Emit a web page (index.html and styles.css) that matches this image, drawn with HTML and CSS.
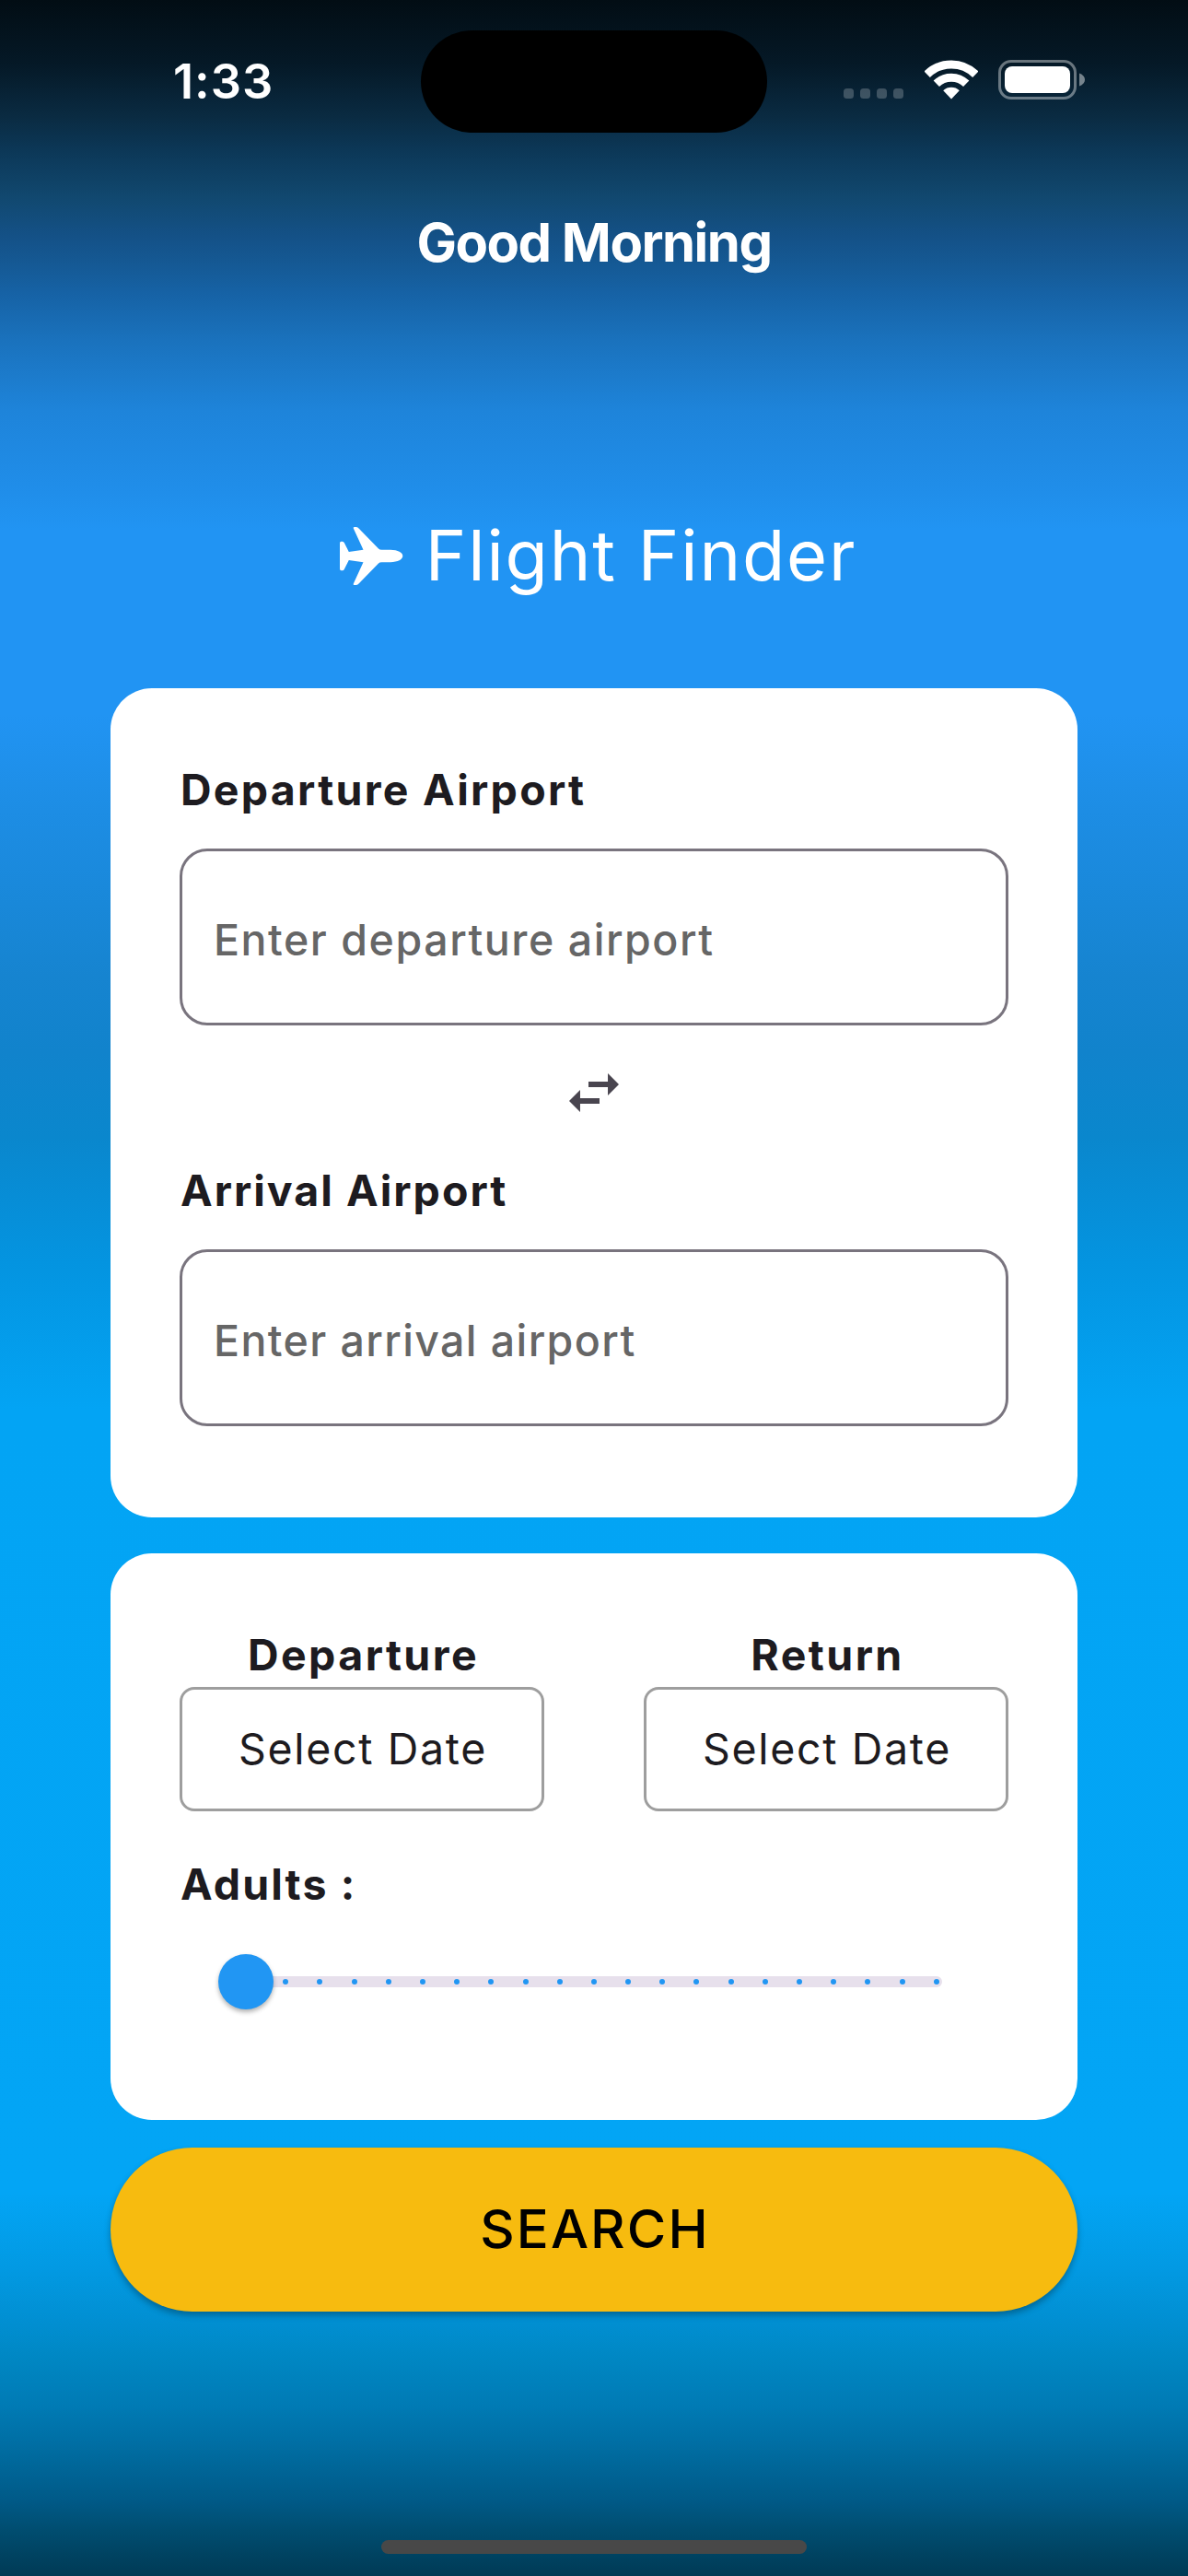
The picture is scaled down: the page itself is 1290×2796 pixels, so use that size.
FILE: index.html
```
<!DOCTYPE html>
<html lang="en">
<head>
<meta charset="utf-8">
<title>Flight Finder</title>
<link rel="stylesheet" href="styles.css">
</head>
<body>
<div class="screen">
  <header class="status-bar">
    <div class="time">1:33</div>
    <div class="island"></div>
    <div class="status-icons">
      <div class="signal"><i></i><i></i><i></i><i></i></div>
      <svg class="wifi" viewBox="0 0 58 43" width="58" height="43">
        <g fill="none" stroke="#fff" stroke-width="9">
          <path d="M2.7 15.7 A37.5 37.5 0 0 1 55.3 15.7"/>
          <path d="M12.8 25.8 A23 23 0 0 1 45.2 25.8"/>
        </g>
        <path fill="#fff" d="M29 42.4 L20.2 33.2 A13 13 0 0 1 37.8 33.2 Z"/>
      </svg>
      <svg class="battery" viewBox="0 0 94 43" width="94" height="43">
        <rect x="1.5" y="1.5" width="82" height="40" rx="12.5" fill="none" stroke="#fff" stroke-opacity=".4" stroke-width="3"/>
        <rect x="7" y="7" width="71" height="29" rx="8" fill="#fff"/>
        <path d="M88 14.5 C92 16 94 18.500 94 21.500 S92 27 88 28.500 Z" fill="#fff" fill-opacity=".45"/>
      </svg>
    </div>
  </header>

  <div class="greeting">Good Morning</div>

  <h1 class="title">
    <svg class="plane" viewBox="0 0 78 79" width="78" height="79">
      <path fill="#fff" d="M9 25.500 Q9 23.700 10.500 23.700 L11.800 23.700 Q13.200 23.700 13.900 25.300 L18.800 35 L34.500 32.700 L23.800 9.600 Q23.200 8 24.800 8 L26.800 8 Q28.600 8 29.800 9.700 L51 31.500 Q52 32.800 54.500 32.800 L64 32.800 C72 33 77.300 35.700 77.300 39.500 S72 46 64 46.200 L54.500 46.200 Q52 46.200 51 47.500 L29.800 69.300 Q28.600 71 26.800 71 L24.800 71 Q23.200 71 23.800 69.400 L34.500 46.300 L18.800 44 L13.900 53.700 Q13.200 55.300 11.800 55.300 L10.500 55.300 Q9 55.300 9 53.500 Z"/>
    </svg>
    <span>Flight Finder</span>
  </h1>

  <section class="card route">
    <div class="label">Departure Airport</div>
    <div class="field"><span>Enter departure airport</span></div>
    <div class="swap">
      <svg viewBox="0 0 24 24" width="72" height="72"><path fill="#49454f" d="M6.990 11L3 15l3.990 4v-3H14v-2H6.990v-3zM21 9l-3.990-4v3H10v2h7.010v3L21 9z"/></svg>
    </div>
    <div class="label arrival">Arrival Airport</div>
    <div class="field arrival-field"><span>Enter arrival airport</span></div>
  </section>

  <section class="card trip">
    <div class="dates">
      <div class="date">
        <div class="date-label">Departure</div>
        <div class="date-box">Select Date</div>
      </div>
      <div class="date">
        <div class="date-label">Return</div>
        <div class="date-box">Select Date</div>
      </div>
    </div>
    <div class="label adults">Adults :</div>
    <div class="slider">
      <div class="ticks">
        <i></i><i></i><i></i><i></i><i></i><i></i><i></i><i></i><i></i><i></i><i></i>
        <i></i><i></i><i></i><i></i><i></i><i></i><i></i><i></i><i></i><i></i>
      </div>
      <div class="thumb"></div>
    </div>
  </section>

  <div class="search">SEARCH</div>

  <div class="home-indicator"></div>
</div>
</body>
</html>
```
FILE: styles.css
```
* { box-sizing: border-box; }

body {
  margin: 0;
  font-family: Inter, "Liberation Sans", sans-serif;
  color: #1d1b20;
}

.screen {
  width: 1290px;
  height: 2796px;
  display: flex;
  flex-direction: column;
  align-items: center;
  overflow: hidden;
  background: linear-gradient(to bottom,
    #020d14 0,
    #051927 70px,
    #0a2b42 127px,
    #0c3858 165px,
    #11486f 214px,
    #145187 257px,
    #155a96 290px,
    #1662a5 318px,
    #1a72bd 370px,
    #1e84da 446px,
    #208eea 535px,
    #2194f3 575px,
    #2194f3 775px,
    #1d8de4 880px,
    #1684d0 1060px,
    #1183cc 1141px,
    #0a87cd 1235px,
    #0494e0 1370px,
    #03a4f4 1530px,
    #03a5f5 2380px,
    #0299e2 2465px,
    #018ed0 2525px,
    #0087c3 2560px,
    #007ab4 2613px,
    #006b9f 2663px,
    #005a88 2713px,
    #004d70 2746px,
    #003a55 2796px);
}

.status-bar {
  width: 100%;
  height: 223px;
  flex: none;
  display: grid;
  grid-template-columns: 457px 376px 457px;
  align-items: start;
}

.time {
  margin-top: 58px;
  padding-left: 188px;
  font-size: 52.3px;
  line-height: 60px;
  font-weight: 600;
  letter-spacing: 1px;
  color: #fff;
}

.island {
  height: 111px;
  margin-top: 33px;
  border-radius: 56px;
  background: #000;
}

.status-icons {
  display: flex;
  align-items: flex-start;
  padding: 65px 0 0 83px;
}

.signal {
  display: flex;
  gap: 7px;
  padding-top: 31px;
  margin-right: 23px;
}

.signal i {
  width: 11px;
  height: 11px;
  border-radius: 3.5px;
  background: rgba(255, 255, 255, .22);
}

.wifi { margin-right: 22px; }

.greeting {
  flex: none;
  font-size: 58px;
  line-height: 80px;
  font-weight: 700;
  letter-spacing: -1.5px;
  color: #fff;
}

.title {
  flex: none;
  display: flex;
  align-items: center;
  gap: 24px;
  height: 100px;
  margin: 250px 0 94px;
  font-size: 75.6px;
  line-height: 100px;
  font-weight: 400;
  letter-spacing: 1.82px;
  color: #fff;
}

.card {
  width: 1050px;
  flex: none;
  padding: 80px 75px 0;
  border-radius: 45px;
  background: #fff;
}

.route { height: 900px; }

.label {
  padding-left: 1px;
  font-size: 46.5px;
  line-height: 60px;
  font-weight: 700;
  letter-spacing: 2.27px;
}

.arrival { letter-spacing: 2px; }

.adults { letter-spacing: 2.1px; }

.field {
  display: flex;
  align-items: center;
  height: 192px;
  margin-top: 34px;
  padding: 5px 34px 0;
  border: 3px solid #79747e;
  border-radius: 30px;
  font-size: 46.5px;
  line-height: 60px;
  font-weight: 500;
  letter-spacing: 1.54px;
  color: #666;
}

.arrival-field { letter-spacing: 1.39px; }

.swap {
  display: flex;
  justify-content: center;
  height: 149px;
  padding-top: 37px;
}

.trip {
  height: 615px;
  margin: 39px 0 30px;
  padding-top: 82px;
}

.dates {
  display: flex;
  justify-content: space-between;
}

.date {
  width: 396px;
  text-align: center;
}

.date-label {
  padding-left: 3px;
  font-size: 46.5px;
  line-height: 56px;
  font-weight: 700;
  letter-spacing: 2.42px;
}

.date-box {
  height: 135px;
  margin-top: 7px;
  padding-left: 2px;
  border: 3px solid #9e9e9e;
  border-radius: 16px;
  font-size: 46.5px;
  line-height: 129px;
  letter-spacing: 1.65px;
}

.adults { margin-top: 49px; }

.slider {
  position: relative;
  width: 756px;
  margin: 70px 0 0 72px;
}

.ticks {
  display: flex;
  align-items: center;
  justify-content: space-between;
  height: 12px;
  padding: 0 3px;
  border-radius: 6px;
  background: #e7e0ec;
}

.ticks i {
  width: 6px;
  height: 6px;
  border-radius: 50%;
  background: #2196f3;
}

.thumb {
  position: absolute;
  left: -30px;
  top: -24px;
  width: 60px;
  height: 60px;
  border-radius: 50%;
  background: #2196f3;
  box-shadow: 0 3px 5px rgba(0, 0, 0, .3);
}

.search {
  width: 1050px;
  height: 178px;
  flex: none;
  padding-left: 2px;
  border-radius: 89px;
  background: #f7bb0f;
  box-shadow: 0 4px 7px rgba(0, 0, 0, .3);
  font-size: 58px;
  line-height: 176px;
  font-weight: 500;
  letter-spacing: 2.1px;
  text-align: center;
  color: #000;
}

.home-indicator {
  width: 462px;
  height: 15px;
  flex: none;
  margin-top: 248px;
  border-radius: 8px;
  background: #484848;
}
```
